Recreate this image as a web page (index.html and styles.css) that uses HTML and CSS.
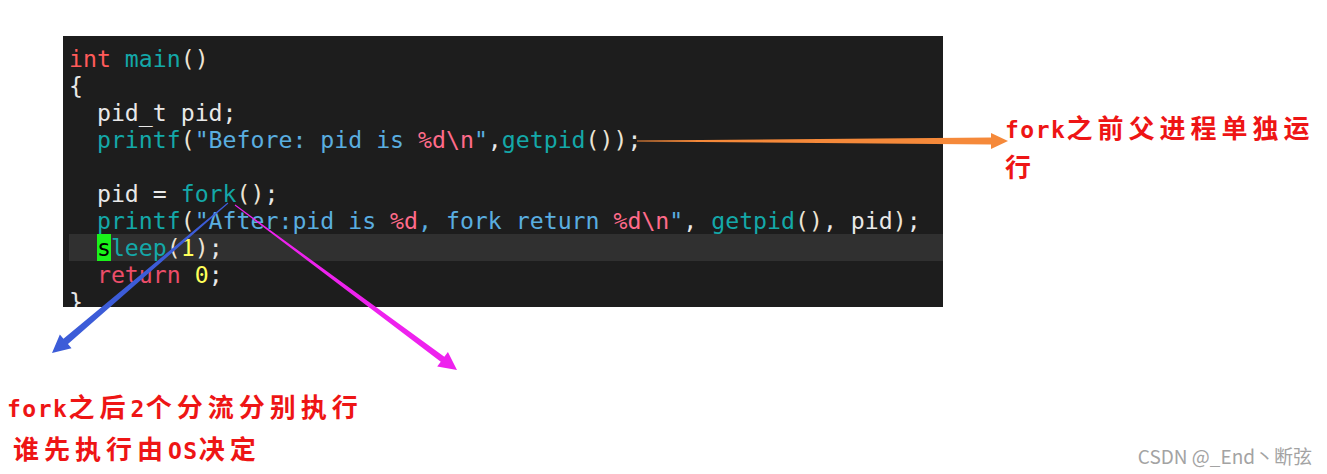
FILE: index.html
```html
<!DOCTYPE html>
<html>
<head>
<meta charset="utf-8">
<link rel="stylesheet" href="styles.css">
</head>
<body>
<div class="page">
  <div class="code">
    <div class="ln"><span class="kw">int</span> <span class="fn">main</span><span class="pn">()</span></div>
    <div class="ln">{</div>
    <div class="ln">  pid_t pid;</div>
    <div class="ln">  <span class="fn">printf</span><span class="pn">(</span><span class="st">"Before: pid is </span><span class="fm">%d\n</span><span class="st">"</span>,<span class="fn">getpid</span><span class="pn">())</span>;</div>
    <div class="ln"> </div>
    <div class="ln">  pid = <span class="fn">fork</span><span class="pn">()</span>;</div>
    <div class="ln">  <span class="fn">printf</span><span class="pn">(</span><span class="st">"After:pid is </span><span class="fm">%d</span><span class="st">, fork return </span><span class="fm">%d\n</span><span class="st">"</span>, <span class="fn">getpid</span><span class="pn">()</span>, pid<span class="pn">)</span>;</div>
    <div class="ln cur">  <span class="cursor">s</span><span class="fn">leep</span><span class="pn">(</span><span class="nm">1</span><span class="pn">)</span>;</div>
    <div class="ln">  <span class="rt">return</span> <span class="nm">0</span>;</div>
    <div class="ln">}</div>
  </div>

  <div class="note-bottom">
    <div class="nl"><span class="lat">fork</span>之后<span class="lat">2</span>个分流分别执行</div>
    <div class="nl nl2">谁先执行由<span class="lat">OS</span>决定</div>
  </div>

  <div class="note-right"><span class="lat">fork</span>之前父进程单独运行</div>

  <svg class="arrows" width="1327" height="474" viewBox="0 0 1327 474">
    <polygon fill="#f5893a" points="637,140.5 991,137.5 991,133 1008,141 991,149 991,144.5 637,141.5"/>
    <polygon fill="#3c5cd8" points="227.7,202.6 63.43,338.64 59.86,334.45 52,353 71.54,348.15 67.97,343.96 228.3,203.4"/>
    <polygon fill="#ee22ee" points="235.3,204.6 444.34,356.85 447.92,352.04 457,370 437.18,366.48 440.76,361.67 234.7,205.4"/>
  </svg>

  <div class="watermark">CSDN @_End丶断弦</div>
</div>
</body>
</html>
```

FILE: styles.css
```css
html, body {
  margin: 0;
  padding: 0;
  background: #ffffff;
}

.page {
  position: relative;
  width: 1327px;
  height: 474px;
  overflow: hidden;
  background: #ffffff;
}

.code {
  margin-left: 63px;
  margin-top: 36px;
  width: 874px;
  height: 262px;
  padding: 9px 0 0 6px;
  background: #1d1d1d;
  overflow: hidden;
  font-family: "DejaVu Sans Mono", monospace;
  font-size: 23.2px;
  line-height: 27px;
  color: #e8e8e8;
}

.ln {
  white-space: pre;
  height: 27px;
}

.ln.cur {
  background: #303030;
}

.kw { color: #ff5a5a; }
.fn { color: #14a8a8; }
.pn { color: #ece4d4; }
.st { color: #5aaee0; }
.fm { color: #ff6b8a; }
.rt { color: #ec4d69; }
.nm { color: #ffff5a; }

.cursor {
  background: #1af21a;
  color: #000000;
}

.note-bottom,
.note-right {
  font-family: "Noto Sans CJK SC", sans-serif;
  font-weight: 700;
  font-size: 26px;
  letter-spacing: 5px;
  color: #ee1515;
  line-height: 42px;
}

.note-bottom {
  margin-top: 78px;
  padding-left: 7px;
}

.nl2 {
  padding-left: 6px;
}

.lat {
  font-family: "DejaVu Sans Mono", monospace;
  font-size: 23px;
  font-weight: 700;
  letter-spacing: 1.5px;
  line-height: 1;
}

.note-right {
  position: absolute;
  left: 1005px;
  top: 107px;
  width: 320px;
  line-height: 39px;
}

.arrows {
  position: absolute;
  left: 0;
  top: 0;
  pointer-events: none;
}

.watermark {
  position: absolute;
  right: 15px;
  bottom: 6px;
  font-family: "Noto Sans CJK SC", sans-serif;
  font-size: 19px;
  color: #a3a3a3;
  line-height: 24px;
}
```
